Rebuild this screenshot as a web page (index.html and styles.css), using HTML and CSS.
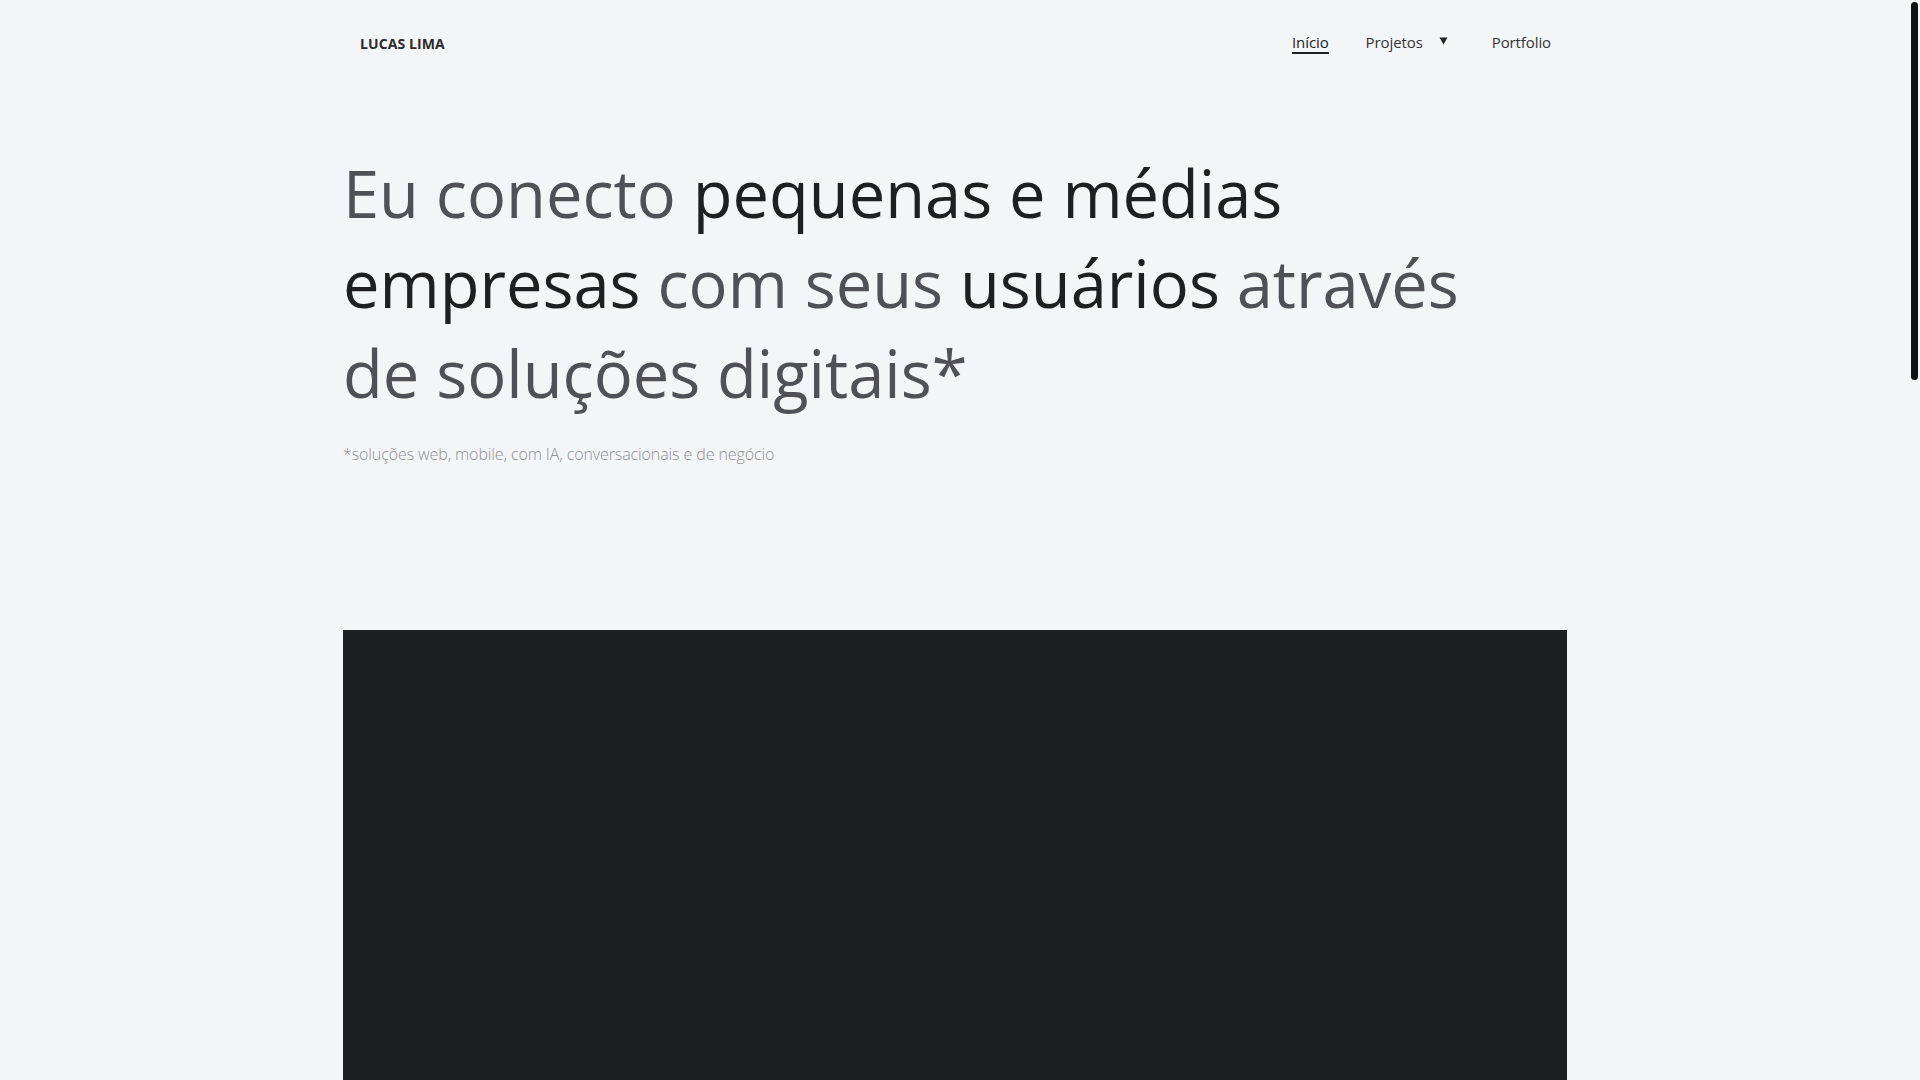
FILE: index.html
```html
<!DOCTYPE html>
<html lang="pt-BR">
<head>
<meta charset="utf-8">
<title>Lucas Lima</title>
<link rel="stylesheet" href="styles.css">
</head>
<body>
<div class="container">
  <header class="header">
    <a class="brand" href="#">LUCAS LIMA</a>
    <nav class="nav">
      <a class="nav-link active" href="#">Início</a>
      <a class="nav-link dropdown" href="#">Projetos
        <svg class="caret" width="9" height="8" viewBox="0 0 9 8" aria-hidden="true"><path d="M0.5 0.5 H8.5 L4.5 7.5 Z" fill="#222"/></svg>
      </a>
      <a class="nav-link" href="#">Portfolio</a>
    </nav>
  </header>

  <section class="hero">
    <h1 class="hero-title"><span class="muted">Eu conecto</span> pequenas e médias empresas <span class="muted">com seus</span> usuários <span class="muted">através de soluções digitais*</span></h1>
    <p class="hero-note">*soluções web, mobile, com IA, conversacionais e de negócio</p>
  </section>

  <section class="showcase"></section>
</div>
<div class="scrollbar" aria-hidden="true"><div class="scrollbar-thumb"></div></div>
</body>
</html>
```

FILE: styles.css
```css
html {
  background: #f4f5f7;
  scrollbar-width: none;
}
html::-webkit-scrollbar {
  display: none;
}
body {
  margin: 0 10px 0 0;
  background: #f4f5f7;
  font-family: "Open Sans", "Noto Sans", sans-serif;
  color: #222;
}
.container {
  width: 1224px;
  margin: 0 auto;
}
.header {
  height: 86px;
  display: flex;
  align-items: center;
  justify-content: space-between;
  padding: 0 16px 0 17px;
}
.brand {
  font-size: 14px;
  font-weight: 700;
  color: #2b2b2e;
  text-decoration: none;
  letter-spacing: 0.1px;
}
.nav {
  display: flex;
  align-items: center;
  gap: 37px;
  margin-top: -3px;
}
.nav-link {
  font-size: 15px;
  color: #333;
  text-decoration: none;
  line-height: 20px;
  display: flex;
  align-items: center;
  letter-spacing: -0.1px;
}
.nav-link.active {
  color: #222;
  padding-top: 3px;
  border-bottom: 2px solid #222;
}
.nav-link.dropdown {
  gap: 16px;
  margin-right: 7px;
}
.caret {
  display: block;
  margin-top: -1px;
}
.hero {
  padding-top: 62px;
}
.hero-title {
  margin: 0;
  max-width: 1160px;
  font-size: 65px;
  font-weight: 400;
  line-height: 90px;
  color: #1f1f20;
}
.muted {
  color: #505056;
}
.hero-note {
  margin: 24px 0 0;
  font-size: 16px;
  font-weight: 300;
  line-height: 24px;
  color: #8f8f93;
  letter-spacing: -0.1px;
}
.showcase {
  margin-top: 164px;
  height: 2450px;
  background: #1e1f21;
}
.scrollbar {
  position: fixed;
  top: 0;
  right: 0;
  bottom: 0;
  width: 10px;
  background: #f4f5f7;
}
.scrollbar-thumb {
  margin: 2px 2px 0 1px;
  height: 378px;
  background: #111;
  border-radius: 4px;
}
```
